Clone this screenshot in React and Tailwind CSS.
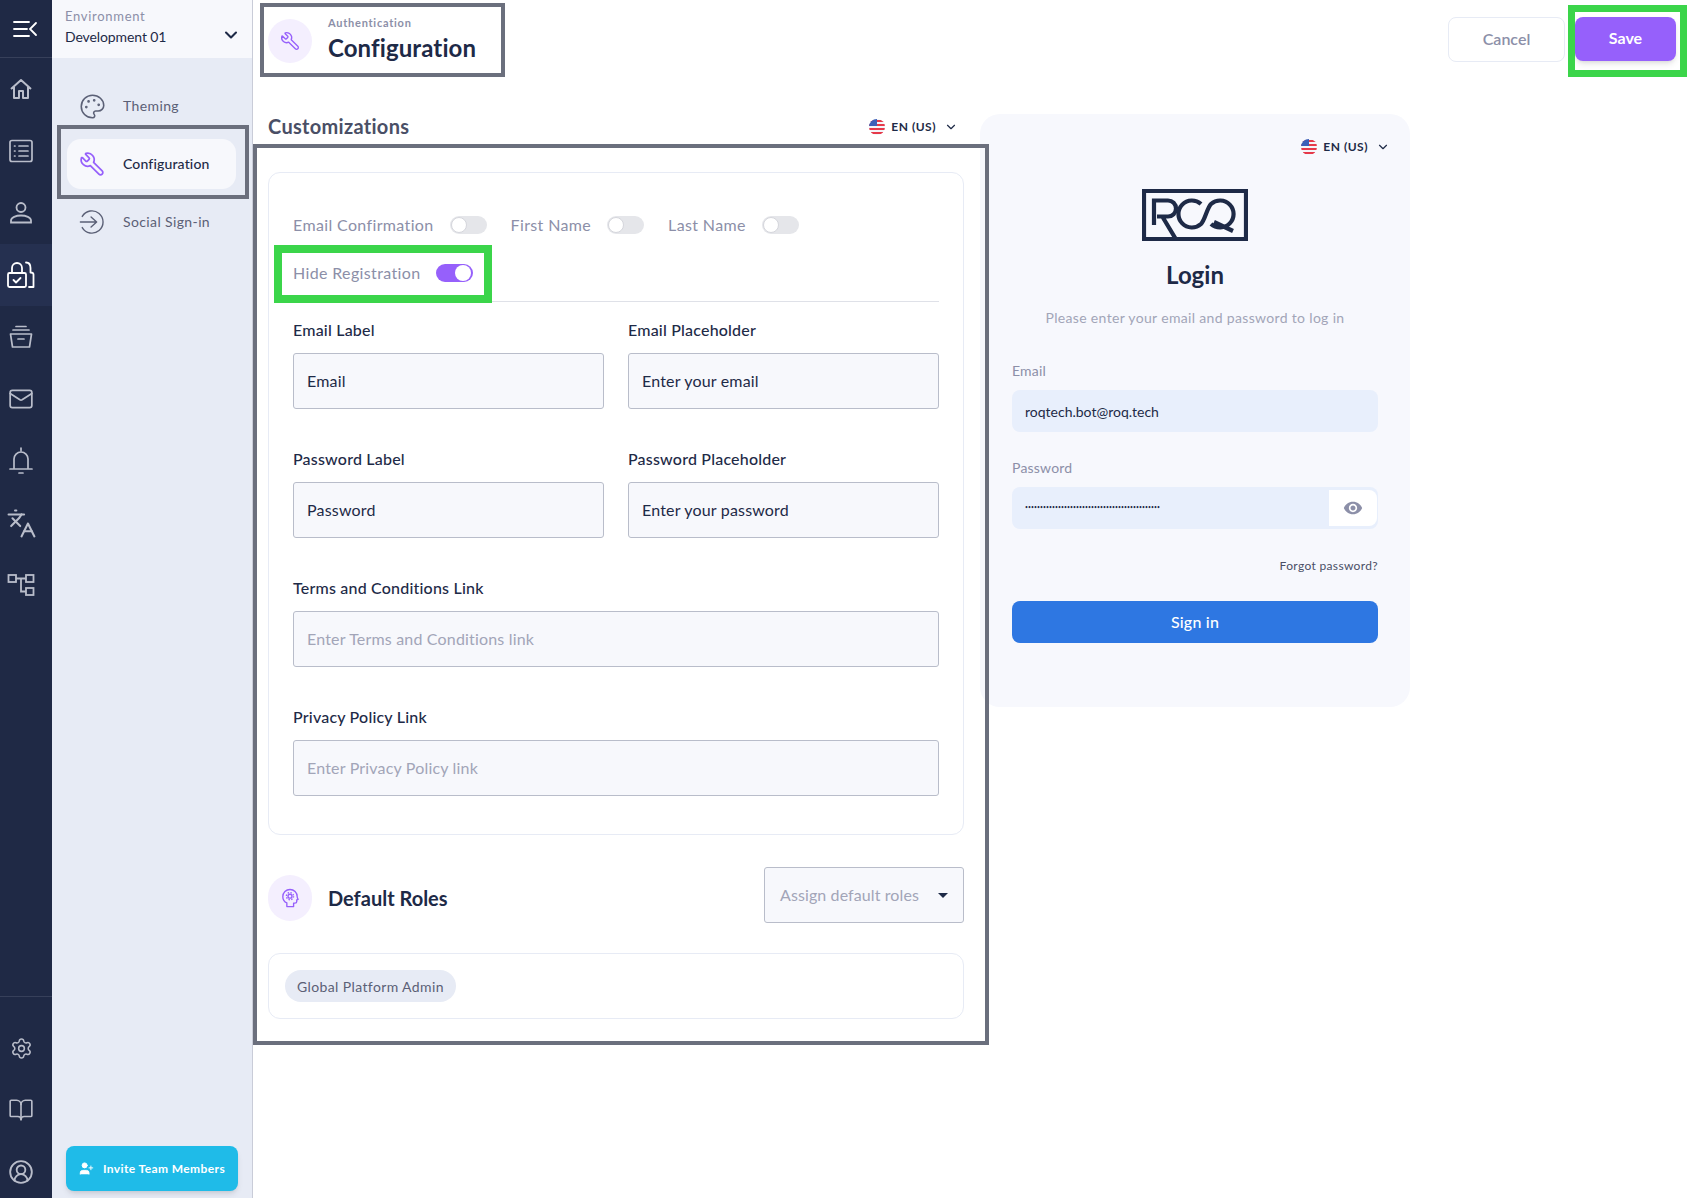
import { useId } from "react";
import {
  BookOpen,
  ChevronDown,
  CircleUserRound,
  Languages,
  Mail,
  Palette,
  Settings,
  UserPlus,
  Wrench,
} from "lucide-react";
import { MdRemoveRedEye } from "react-icons/md";

const railIconClass = "w-[26px] h-[26px] text-[#b9bdca]";

function MenuIcon() {
  return (
    <svg viewBox="0 0 26 20" className="w-[26px] h-5 text-white" fill="none" stroke="currentColor" strokeWidth="1.8" strokeLinecap="round">
      <path d="M2 3h15M2 10h13M2 17h15M24 4l-6 6 6 6" />
    </svg>
  );
}

function HomeIcon() {
  return (
    <svg viewBox="0 0 26 26" className={railIconClass} fill="none" stroke="currentColor" strokeWidth="2" strokeLinejoin="round">
      <path d="M3 13 13 4l10 9M6 11v11h5v-7h4v7h5V11" />
    </svg>
  );
}

function ListIcon() {
  return (
    <svg viewBox="0 0 26 26" className={railIconClass} fill="none" stroke="currentColor" strokeWidth="1.7" strokeLinecap="round">
      <rect x="2" y="2.5" width="22" height="21" rx="2" />
      <path d="M11 8h9M11 13h9M11 18h9M6.5 8h.5M6.5 13h.5M6.5 18h.5" />
    </svg>
  );
}

function PersonIcon() {
  return (
    <svg viewBox="0 0 26 26" className={railIconClass} fill="none" stroke="currentColor" strokeWidth="1.8">
      <circle cx="13" cy="7.5" r="4.5" />
      <path d="M3 22.5v-2c0-3 5-5 10-5s10 2 10 5v2z" />
    </svg>
  );
}

function LockIcon() {
  return (
    <svg viewBox="0 0 30 30" className="w-[30px] h-[30px] text-white" fill="none" stroke="currentColor" strokeWidth="1.8" strokeLinecap="round" strokeLinejoin="round">
      <rect x="2" y="13" width="18" height="14" rx="1.5" />
      <path d="M6 13V8a5 5 0 0 1 10 0v5M20 2.5c3 0 4.5 2.5 4.5 5.5v4.5c2 0 3 .5 3 2V27h-4.5M7.5 20l2.5 2.5 4.5-4.5" />
    </svg>
  );
}

function ArchiveIcon() {
  return (
    <svg viewBox="0 0 26 26" className={railIconClass} fill="none" stroke="currentColor" strokeWidth="1.7" strokeLinecap="round" strokeLinejoin="round">
      <path d="M8 2.5h10M5 6h16M2.5 10h21l-2 13h-17zM10 15h6" />
    </svg>
  );
}

function BellIcon() {
  return (
    <svg viewBox="0 0 26 30" className="w-[26px] h-[30px] text-[#b9bdca]" fill="none" stroke="currentColor" strokeWidth="1.7" strokeLinecap="round" strokeLinejoin="round">
      <path d="M13 2v2.5M6 22V13a7 7 0 0 1 14 0v9M2 23h22M11 27h4" />
    </svg>
  );
}

function TreeIcon() {
  return (
    <svg viewBox="0 0 28 26" className="w-7 h-[26px] text-[#b9bdca]" fill="none" stroke="currentColor" strokeWidth="1.8">
      <rect x="1.5" y="3" width="7.5" height="7" />
      <rect x="19" y="3" width="7.5" height="7" />
      <rect x="19" y="16" width="7.5" height="7" />
      <path d="M9 6.5h10M14 6.5v13h5" />
    </svg>
  );
}

function SignInIcon() {
  return (
    <svg viewBox="0 0 28 28" className="w-[26px] h-[26px] text-[#5b6076]" fill="none" stroke="currentColor" strokeWidth="1.5" strokeLinecap="round" strokeLinejoin="round">
      <path d="M3.5 8A12 12 0 1 1 3.5 20M1.5 14h17M13 8.5l6 5.5-6 5.5" />
    </svg>
  );
}

function HeadIcon() {
  return (
    <svg viewBox="0 0 20 22" className="w-[18px] h-5 text-[#9660fb]" fill="none" stroke="currentColor" strokeWidth="1.5" strokeLinejoin="round">
      <path d="M6.5 20.5v-4C3.5 15 2 12.5 2 9.5a8 8 0 0 1 16 0c0 1 .5 2 1 3l-1.5.7V15c0 1-1 1.7-2 1.7h-1.5v3.8z" />
      <circle cx="10" cy="9" r="2.2" />
      <circle cx="10" cy="9" r="4" strokeDasharray="1.6 1.54" />
    </svg>
  );
}

function Flag() {
  const id = useId();
  return (
    <svg viewBox="0 0 16 16" className="w-4 h-4 shrink-0">
      <clipPath id={id}>
        <circle cx="8" cy="8" r="8" />
      </clipPath>
      <g clipPath={`url(#${id})`}>
        <rect width="16" height="16" fill="#f4f5f9" />
        <path d="M0 1h16v2H0zM0 5h16v2H0zM0 9h16v2H0zM0 13h16v2H0z" fill="#e5394a" />
        <rect width="8" height="7" fill="#3c5fb8" />
      </g>
    </svg>
  );
}

function LangSelect() {
  return (
    <div className="flex items-center text-[12px] font-bold tracking-[0.5px] text-[#1e2a47]">
      <Flag />
      <span className="ml-[6px]">EN (US)</span>
      <ChevronDown className="ml-[8px] w-[14px] h-[14px]" strokeWidth={2} />
    </div>
  );
}

function Toggle({ on }) {
  return (
    <div className={`w-[37px] h-[18px] rounded-full flex items-center px-[1px] ${on ? "bg-[#9660fb] justify-end pr-[2px]" : "bg-[#e5e6ea]"}`}>
      <div className={`w-4 h-4 rounded-full bg-white ${on ? "" : "border border-[#d5d6dc]"}`} />
    </div>
  );
}

function ToggleField({ label, on }) {
  return (
    <div className="flex items-center h-6 gap-4">
      <span className="text-[16px] leading-[22px] tracking-[0.36px] text-[#8c8fa8]">{label}</span>
      <Toggle on={on} />
    </div>
  );
}

function Field({ label, value, placeholder }) {
  return (
    <div>
      <div className="h-5 leading-[19px] text-[16px] font-medium tracking-[0.2px] text-[#1e2a47]">{label}</div>
      <div className="mt-[13px] h-[56px] flex items-center px-[13px] bg-[#f7f8fc] border border-[#b9bdca] rounded-[3px] text-[16px] tracking-[0.18px]">
        {value ? <span className="text-[#1e2a47]">{value}</span> : <span className="text-[#a2a5b8]">{placeholder}</span>}
      </div>
    </div>
  );
}

function SubNavItem({ icon, label, active }) {
  return (
    <div className={`h-[50px] flex items-center pl-[11px] rounded-[14px] ${active ? "bg-[#f7f8fc]" : ""}`}>
      <div className="w-[28px] flex justify-center">{icon}</div>
      <span className={`ml-[17px] text-[14px] leading-[19px] pb-[1px] ${active ? "font-medium tracking-[0.15px] text-[#1e2a47]" : "tracking-[0.38px] text-[#5b6076]"}`}>{label}</span>
    </div>
  );
}

function RailItem({ children, active }) {
  return (
    <div className={`h-[62px] shrink-0 flex items-center justify-center pr-[10px] ${active ? "bg-[#253050]" : ""}`}>
      {children}
    </div>
  );
}

function Logo() {
  return (
    <svg viewBox="0 0 106 52" className="w-[106px] h-[52px] text-[#1e2a47]" fill="none" stroke="currentColor" strokeWidth="4.2">
      <path d="M41 50H2V2h102v48H36" />
      <path d="M12 36V11.5h14a8 8 0 0 1 0 16H15M20 27l15 25" />
      <path d="M59 15A13.5 13.5 0 1 0 59 35C63 31 65 19 69 15A13.5 13.5 0 1 1 69 35" />
      <path d="M72 33l19 9" />
    </svg>
  );
}

// review annotations drawn on top of the screen
function Mark({ className }) {
  return <div className={`absolute pointer-events-none ${className}`} />;
}

export default function App() {
  return (
    <div className="relative flex w-full h-[1198px] overflow-hidden bg-white font-['Lato',sans-serif]">
      {/* Icon rail */}
      <div className="w-[52px] shrink-0 flex flex-col bg-[#1f2945]">
        <div className="h-[58px] shrink-0 flex items-center justify-center pr-[2px] border-b border-[#37405a]">
          <MenuIcon />
        </div>
        <RailItem><HomeIcon /></RailItem>
        <RailItem><ListIcon /></RailItem>
        <RailItem><PersonIcon /></RailItem>
        <RailItem active><LockIcon /></RailItem>
        <RailItem><ArchiveIcon /></RailItem>
        <RailItem><Mail className={railIconClass} strokeWidth={1.6} /></RailItem>
        <RailItem><BellIcon /></RailItem>
        <RailItem><Languages className="w-[31px] h-[31px] text-[#b9bdca]" strokeWidth={1.6} /></RailItem>
        <RailItem><TreeIcon /></RailItem>
        <div className="mt-auto h-[202px] shrink-0 border-t border-[#37405a] pt-[20px]">
          <RailItem><Settings className="w-[23px] h-[23px] text-[#b9bdca]" strokeWidth={1.6} /></RailItem>
          <RailItem><BookOpen className={railIconClass} strokeWidth={1.5} /></RailItem>
          <RailItem><CircleUserRound className={railIconClass} strokeWidth={1.7} /></RailItem>
        </div>
      </div>

      {/* Sub navigation */}
      <div className="w-[201px] shrink-0 flex flex-col bg-[#e7ebf5] border-r border-[#c9ccd8]">
        <div className="h-[58px] shrink-0 bg-[#f7f8fc] pl-[13px] pr-[11px] flex items-center justify-between">
          <div className="pb-[6px]">
            <div className="text-[13px] leading-5 tracking-[0.7px] text-[#8c8fa8]">Environment</div>
            <div className="text-[14px] leading-5 pt-[1px] tracking-[-0.1px] text-[#1e2a47]">Development 01</div>
          </div>
          <ChevronDown className="w-5 h-5 mt-[12px] text-[#1e2a47]" strokeWidth={2.5} />
        </div>
        <div className="pt-[23px] pl-[15px] pr-[16px] flex flex-col gap-2">
          <SubNavItem icon={<Palette className="w-[27px] h-[27px] text-[#5b6076]" strokeWidth={1.4} />} label="Theming" />
          <SubNavItem active icon={<Wrench className="w-[26px] h-[26px] text-[#9660fb] -scale-x-100" strokeWidth={1.6} />} label="Configuration" />
          <SubNavItem icon={<SignInIcon />} label="Social Sign-in" />
        </div>
        <div className="mt-auto mb-[7px] ml-[14px] mr-[14px] h-[45px] flex items-center justify-center gap-[9px] rounded-lg bg-[#1fbbe8] shadow-md text-white text-[12px] font-bold tracking-[0.4px]">
          <UserPlus className="w-[15px] h-[15px]" fill="currentColor" strokeWidth={1.5} />
          Invite Team Members
        </div>
      </div>

      {/* Main */}
      <div className="flex-1 min-w-0 pl-[15px] pr-[23px]">
        <div className="h-[114px] flex items-start justify-between pt-[17px]">
          <div className="flex items-start pt-[2px]">
            <div className="w-[44px] h-[44px] rounded-full bg-[#f4effe] flex items-center justify-center">
              <Wrench className="w-5 h-5 text-[#9660fb] -scale-x-100" strokeWidth={1.6} />
            </div>
            <div className="ml-4 -mt-[3px]">
              <div className="mb-[2px] text-[11px] leading-[14px] font-bold tracking-[0.75px] text-[#8c8fa8]">Authentication</div>
              <div className="text-[24px] leading-[32px] font-bold tracking-[0.1px] text-[#1e2a47]">Configuration</div>
            </div>
          </div>
          <div className="flex items-start gap-[10px]">
            <div className="w-[117px] h-[45px] pb-[2px] flex items-center justify-center rounded-lg border border-[#e7ebf5] text-[16px] font-semibold text-[#8c8fa8]">Cancel</div>
            <div className="w-[101px] h-[44px] pb-[2px] flex items-center justify-center rounded-lg bg-[#9660fb] shadow-md text-[16px] font-bold text-white">Save</div>
          </div>
        </div>

        <div className="flex items-start gap-4">
          {/* Form column */}
          <div className="w-[696px] shrink-0">
            <div className="h-[58px] flex items-start justify-between pr-[6px]">
              <div className="h-6 leading-6 text-[20px] font-bold tracking-[0.3px] text-[#4a4f66]">Customizations</div>
              <div className="h-6 flex items-center pt-[2px]"><LangSelect /></div>
            </div>
            <div className="h-[663px] border border-[#e7ebf5] rounded-xl px-6 pt-[40px]">
              <div className="flex flex-col gap-6 pb-4 border-b border-[#dfe1e8]">
                <div className="flex gap-6">
                  <ToggleField label="Email Confirmation" />
                  <ToggleField label="First Name" />
                  <ToggleField label="Last Name" />
                </div>
                <ToggleField label="Hide Registration" on />
              </div>
              <div className="mt-[18px] grid grid-cols-2 gap-x-6 gap-y-10">
                <Field label="Email Label" value="Email" />
                <Field label="Email Placeholder" value="Enter your email" />
                <Field label="Password Label" value="Password" />
                <Field label="Password Placeholder" value="Enter your password" />
                <div className="col-span-2">
                  <Field label="Terms and Conditions Link" placeholder="Enter Terms and Conditions link" />
                </div>
                <div className="col-span-2">
                  <Field label="Privacy Policy Link" placeholder="Enter Privacy Policy link" />
                </div>
              </div>
            </div>

            <div className="mt-8 h-[56px] flex items-center justify-between">
              <div className="flex items-center pt-[6px]">
                <div className="w-[44px] h-[46px] rounded-full bg-[#f4effe] flex items-center justify-center">
                  <HeadIcon />
                </div>
                <div className="ml-4 text-[20px] font-bold text-[#1e2a47]">Default Roles</div>
              </div>
              <div className="w-[200px] h-[56px] pl-[15px] pr-[15px] flex items-center justify-between bg-[#f7f8fc] border border-[#b9bdca] rounded-[3px] text-[16px] tracking-[0.1px] text-[#a2a5b8]">
                Assign default roles
                <div className="w-0 h-0 border-x-[5px] border-x-transparent border-t-[5px] border-t-[#1e2a47]" />
              </div>
            </div>

            <div className="mt-[30px] h-[66px] border border-[#e7ebf5] rounded-xl flex items-center pl-4">
              <div className="h-8 px-3 flex items-center rounded-full bg-[#e7ebf5] text-[14px] tracking-[0.38px] text-[#5b6076]">Global Platform Admin</div>
            </div>
          </div>

          {/* Login preview */}
          <div className="w-[430px] h-[593px] shrink-0 rounded-[20px] bg-[#f7f8fd] px-8 pt-[22px]">
            <div className="h-[22px] flex justify-end -mr-[12px]"><LangSelect /></div>
            <div className="mt-[31px] flex justify-center"><Logo /></div>
            <div className="mt-[18px] h-8 leading-8 text-center text-[24px] font-bold text-[#1e2a47]">Login</div>
            <div className="mt-[17px] h-5 leading-5 text-center text-[14px] tracking-[0.33px] text-[#a2a5b8]">Please enter your email and password to log in</div>
            <div className="mt-[33px] h-5 leading-5 text-[14px] tracking-[0.2px] text-[#8c8fa8]">Email</div>
            <div className="mt-[9px] h-[42px] pl-[13px] flex items-center rounded-lg bg-[#e8effc] text-[14px] text-[#1e2a47]">roqtech.bot@roq.tech</div>
            <div className="mt-[26px] h-5 leading-5 text-[14px] tracking-[0.2px] text-[#8c8fa8]">Password</div>
            <div className="mt-[9px] h-[42px] pl-[13px] pr-[1px] flex items-center justify-between rounded-lg bg-[#e8effc] text-[#1e2a47]">
              <span className="text-[5px] tracking-[0.1px]">•••••••••••••••••••••••••••••••••••••••••••••</span>
              <div className="w-[48px] h-9 flex items-center justify-center rounded-r-lg bg-white">
                <MdRemoveRedEye className="w-5 h-5 text-[#8c8fa8]" />
              </div>
            </div>
            <div className="mt-[27px] h-5 leading-5 text-right text-[12px] tracking-[0.34px] text-[#4a4f66]">Forgot password?</div>
            <div className="mt-[25px] h-[42px] flex items-center justify-center rounded-lg bg-[#2e77e2] text-[16px] font-medium tracking-[0.2px] text-white">Sign in</div>
          </div>
        </div>
      </div>

      {/* Annotations */}
      <Mark className="left-[57px] top-[125px] w-[192px] h-[74px] border-[4px] border-[#6b6f7d]" />
      <Mark className="left-[260px] top-[3px] w-[245px] h-[74px] border-[4px] border-[#6b6f7d]" />
      <Mark className="left-[253px] top-[144px] w-[736px] h-[901px] border-[4px] border-[#6b6f7d]" />
      <Mark className="left-[274px] top-[245px] w-[218px] h-[58px] border-[8px] border-[#3bd54a]" />
      <Mark className="left-[1568px] top-[5px] w-[119px] h-[72px] border-[7px] border-[#3bd54a]" />
    </div>
  );
}
